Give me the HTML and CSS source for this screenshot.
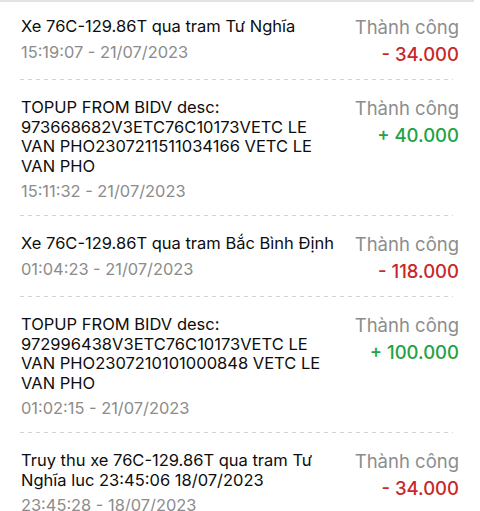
FILE: index.html
```html
<!DOCTYPE html>
<html lang="vi">
<head>
    <meta charset="UTF-8">
    <meta name="viewport" content="width=device-width, initial-scale=1.0">
    <title>Lịch sử giao dịch</title>
    <link rel="stylesheet" href="styles.css">
</head>
<body>

    <div class="top-bar"></div>

    <!-- Transaction history list -->
    <ul class="history">
        <li class="item">
            <div class="info">
                <div class="desc">Xe 76C-129.86T qua tram Tư Nghĩa</div>
                <div class="time">15:19:07 - 21/07/2023</div>
            </div>
            <div class="result">
                <div class="status">Thành công</div>
                <div class="amount minus">- 34.000</div>
            </div>
        </li>
        <li class="item">
            <div class="info">
                <div class="desc">TOPUP FROM BIDV desc: 973668682V3ETC76C10173VETC LE VAN PHO2307211511034166 VETC LE VAN PHO</div>
                <div class="time">15:11:32 - 21/07/2023</div>
            </div>
            <div class="result">
                <div class="status">Thành công</div>
                <div class="amount plus">+ 40.000</div>
            </div>
        </li>
        <li class="item">
            <div class="info">
                <div class="desc">Xe 76C-129.86T qua tram Bắc Bình Định</div>
                <div class="time">01:04:23 - 21/07/2023</div>
            </div>
            <div class="result">
                <div class="status">Thành công</div>
                <div class="amount minus">- 118.000</div>
            </div>
        </li>
        <li class="item">
            <div class="info">
                <div class="desc">TOPUP FROM BIDV desc: 972996438V3ETC76C10173VETC LE VAN PHO2307210101000848 VETC LE VAN PHO</div>
                <div class="time">01:02:15 - 21/07/2023</div>
            </div>
            <div class="result">
                <div class="status">Thành công</div>
                <div class="amount plus">+ 100.000</div>
            </div>
        </li>
        <li class="item">
            <div class="info">
                <div class="desc">Truy thu xe 76C-129.86T qua tram Tư Nghĩa luc 23:45:06 18/07/2023</div>
                <div class="time">23:45:28 - 18/07/2023</div>
            </div>
            <div class="result">
                <div class="status">Thành công</div>
                <div class="amount minus">- 34.000</div>
            </div>
        </li>
    </ul>

</body>
</html>
```

FILE: styles.css
```css
* {
    margin: 0;
    padding: 0;
    box-sizing: border-box;
}

body {
    font-family: 'Inter', 'Liberation Sans', sans-serif;
    background-color: #fff;
    color: #0d0d0d;
    overflow: hidden;
}

.top-bar {
    width: 474px;
    height: 2px;
    background-color: #e2e2e2;
}

.history {
    list-style: none;
}

.item {
    position: relative;
    display: flex;
    justify-content: space-between;
    padding: 19px 21px 14px 21px;
}

.item:first-child {
    padding-top: 15px;
}

/* dashed divider above every item but the first */
.item + .item::before {
    content: '';
    position: absolute;
    top: 0;
    left: 20px;
    width: 433px;
    height: 1px;
    background-image: linear-gradient(to right, #d2d2d2 50%, transparent 50%);
    background-size: 8px 1px;
}

.info {
    width: 318px;
}

.desc {
    font-size: 16.5px;
    line-height: 19.5px;
}

.time {
    margin-top: 5px;
    font-size: 16.4px;
    line-height: 20px;
    color: #8c8c8c;
}

.result {
    text-align: right;
    white-space: nowrap;
}

.status {
    font-size: 18.5px;
    line-height: 20px;
    color: #8d8d8d;
}

.amount {
    margin-top: 6px;
    font-size: 18.5px;
    line-height: 22px;
    font-weight: 500;
}

.minus {
    color: #c8282a;
}

.plus {
    color: #23a244;
}
```
